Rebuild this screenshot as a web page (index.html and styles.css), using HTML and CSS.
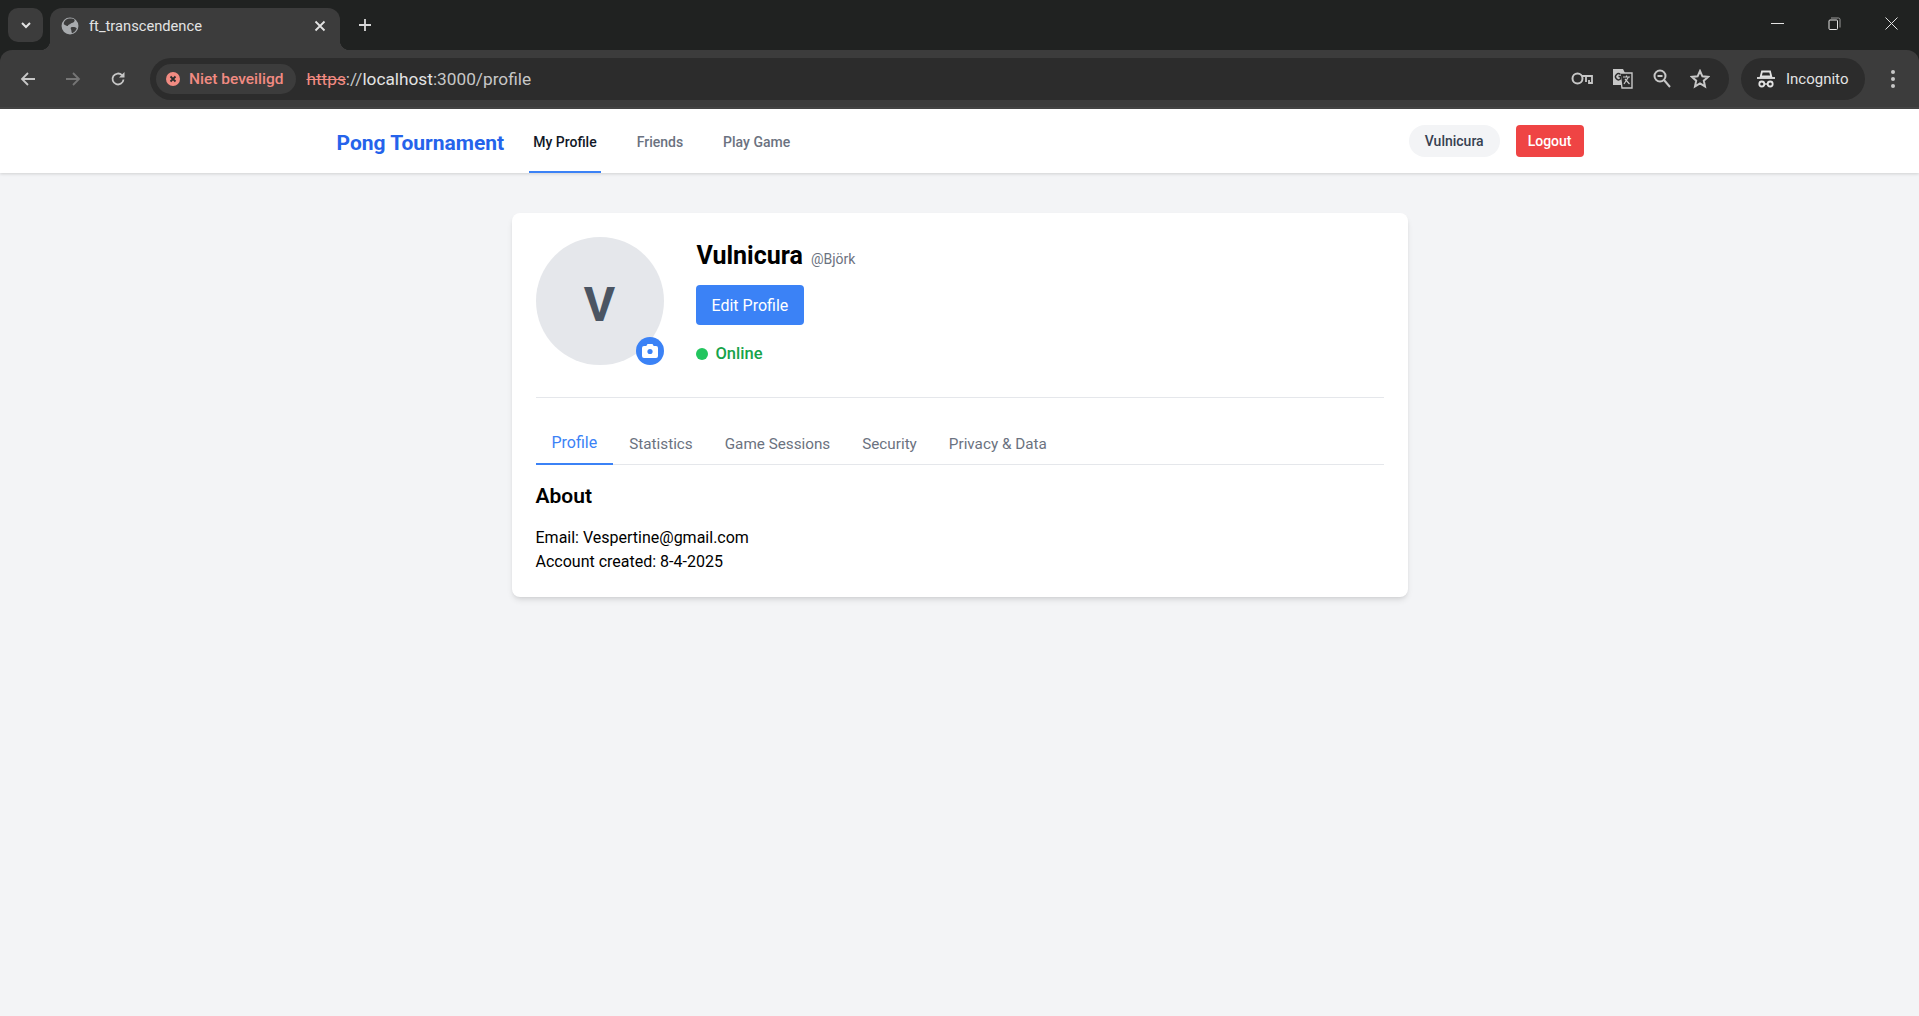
FILE: index.html
```html
<!DOCTYPE html>
<html lang="en">
<head>
    <meta charset="UTF-8">
    <meta name="viewport" content="width=device-width, initial-scale=1.0">
    <title>ft_transcendence</title>
    <link rel="stylesheet" href="styles.css">
</head>
<body>
    <!-- Browser window chrome -->
    <div class="browser-chrome">
        <div class="tab-strip">
            <div class="tab-search">
                <svg width="16" height="16" viewBox="0 0 16 16"><path d="M4 6l4 4 4-4" fill="none" stroke="#e3e3e3" stroke-width="2"/></svg>
            </div>
            <div class="tab">
                <svg class="tab-globe" width="18" height="18" viewBox="0 0 16 16"><circle cx="8" cy="8" r="7.500" fill="#a8abae"/><path d="M6 1.500c2 0 5-.5 6 1 .5 1.500-1 3-3 3-1 1-2.500 1-3 2.500-1 .5-2.500-1-3.500-1.500C2 5 3.500 2.500 6 1.500zM9 9c2-.5 4 0 5 1-.5 2-2 3.500-4 4.500-1-1-.5-2.500-1-3.500-.5-.5-.5-1.500 0-2z" fill="#3c3c3c"/></svg>
                <span class="tab-title">ft_transcendence</span>
                <svg class="tab-close" width="12" height="12" viewBox="0 0 12 12"><path d="M1.500 1.500l9 9M10.500 1.500l-9 9" stroke="#e3e3e3" stroke-width="1.800"/></svg>
            </div>
            <svg class="tab-new" width="14" height="14" viewBox="0 0 14 14"><path d="M7 1v12M1 7h12" stroke="#d8d8d8" stroke-width="1.800"/></svg>
            <div class="window-buttons">
                <svg width="13" height="13" viewBox="0 0 13 13"><path d="M0 6.500h13" stroke="#e3e3e3"/></svg>
                <svg width="13" height="13" viewBox="0 0 13 13"><rect x="1" y="3" width="8.500" height="9.500" rx="1" fill="none" stroke="#e3e3e3"/><path d="M3 1h7.500a1.500 1.500 0 0 1 1.500 1.500v8" fill="none" stroke="#9a9a9a"/></svg>
                <svg width="13" height="13" viewBox="0 0 13 13"><path d="M.5.5l12 12M12.500.5l-12 12" stroke="#e3e3e3"/></svg>
            </div>
        </div>
        <div class="toolbar">
            <svg class="tool-icon" width="16" height="16" viewBox="0 0 16 16"><path d="M15 8H2M8 2L2 8l6 6" fill="none" stroke="#c7c7c7" stroke-width="1.800"/></svg>
            <svg class="tool-icon" width="16" height="16" viewBox="0 0 16 16"><path d="M1 8h13M8 2l6 6-6 6" fill="none" stroke="#757575" stroke-width="1.800"/></svg>
            <svg class="tool-icon" width="16" height="16" viewBox="0 0 16 16"><path d="M13.500 8.500A5.500 5.500 0 1 1 12 4.200" fill="none" stroke="#c7c7c7" stroke-width="1.800"/><path d="M14.500 1v5.500H9z" fill="#c7c7c7"/></svg>
            <div class="omnibox">
                <div class="security-chip">
                    <svg width="14" height="14" viewBox="0 0 14 14"><circle cx="7" cy="7" r="7" fill="#f28b82"/><path d="M4.500 4.500l5 5M9.500 4.500l-5 5" stroke="#2c2c2c" stroke-width="1.800"/></svg>
                    <span>Niet beveiligd</span>
                </div>
                <div class="url"><s>https</s><span class="url-dim">://</span>localhost<span class="url-dim">:3000/profile</span></div>
                <div class="omni-icons">
                    <svg width="22" height="13" viewBox="0 0 22 13"><circle cx="6.500" cy="6.500" r="5" fill="none" stroke="#c7c7c7" stroke-width="2"/><path d="M11 4h10v7h-3V8M15 4v6" fill="none" stroke="#c7c7c7" stroke-width="1.800"/></svg>
                    <svg width="21" height="21" viewBox="0 0 21 21"><path d="M1 1h10l2 4v12H1z" fill="#c7c7c7"/><path d="M8 5h12v15H10z" fill="#2c2c2c" stroke="#c7c7c7" stroke-width="1.400"/><path d="M11 9h7M14.500 7.500V9M12 16l4.500-7M13 11l4.500 5" stroke="#c7c7c7" stroke-width="1.200"/><path d="M8.500 6.500a3 3 0 1 0 0 4.500V8.500H6.500" fill="none" stroke="#2c2c2c" stroke-width="1.400"/></svg>
                    <svg width="18" height="19" viewBox="0 0 18 19"><circle cx="7" cy="7" r="5.500" fill="none" stroke="#c7c7c7" stroke-width="2"/><path d="M4.500 7h5M11 11l6 7" stroke="#c7c7c7" stroke-width="2"/></svg>
                    <svg width="20" height="20" viewBox="0 0 20 20"><path d="M10 2l2.400 5.300 5.600.6-4.200 3.800 1.200 5.700L10 14.500l-5 2.900 1.200-5.700L2 7.900l5.600-.6z" fill="none" stroke="#c7c7c7" stroke-width="2"/></svg>
                </div>
            </div>
            <div class="incognito">
                <svg width="20" height="20" viewBox="0 0 20 20"><path d="M6 2.500h8l1.300 5H4.700z" fill="none" stroke="#e3e3e3" stroke-width="1.800"/><path d="M1 9h18" stroke="#e3e3e3" stroke-width="1.800"/><circle cx="5.800" cy="15" r="2.500" fill="none" stroke="#e3e3e3" stroke-width="1.800"/><circle cx="14.200" cy="15" r="2.500" fill="none" stroke="#e3e3e3" stroke-width="1.800"/><path d="M8.300 15h3.400" stroke="#e3e3e3" stroke-width="1.400"/></svg>
                <span>Incognito</span>
            </div>
            <svg class="menu-dots" width="4" height="18" viewBox="0 0 4 18"><circle cx="2" cy="2" r="2" fill="#c7c7c7"/><circle cx="2" cy="9" r="2" fill="#c7c7c7"/><circle cx="2" cy="16" r="2" fill="#c7c7c7"/></svg>
        </div>
    </div>

    <!-- Site navigation -->
    <nav class="site-nav">
        <div class="nav-inner">
            <a class="brand">Pong Tournament</a>
            <div class="nav-links">
                <a class="nav-link active">My Profile</a>
                <a class="nav-link">Friends</a>
                <a class="nav-link">Play Game</a>
            </div>
            <div class="nav-user">
                <span class="user-pill">Vulnicura</span>
                <button class="logout-btn">Logout</button>
            </div>
        </div>
    </nav>

    <!-- Profile card -->
    <main class="page">
        <section class="card">
            <div class="profile-head">
                <div class="avatar">
                    <span class="avatar-letter">V</span>
                    <div class="avatar-upload">
                        <svg width="16" height="14" viewBox="0 0 16 14"><path d="M5.500 0h5l1.200 2H14a2 2 0 0 1 2 2v8a2 2 0 0 1-2 2H2a2 2 0 0 1-2-2V4a2 2 0 0 1 2-2h2.300z" fill="#fff"/><circle cx="8" cy="7.500" r="2.600" fill="#3b82f6"/></svg>
                    </div>
                </div>
                <div class="profile-info">
                    <div class="name-row">
                        <h1>Vulnicura</h1>
                        <span class="handle">@Björk</span>
                    </div>
                    <button class="edit-btn">Edit Profile</button>
                    <div class="status"><i class="status-dot"></i>Online</div>
                </div>
            </div>
            <div class="tabs">
                <a class="tab-link active">Profile</a>
                <a class="tab-link">Statistics</a>
                <a class="tab-link">Game Sessions</a>
                <a class="tab-link">Security</a>
                <a class="tab-link">Privacy &amp; Data</a>
            </div>
            <h2>About</h2>
            <p>Email: Vespertine@gmail.com</p>
            <p>Account created: 8-4-2025</p>
        </section>
    </main>
</body>
</html>
```

FILE: styles.css
```css
* {
    box-sizing: border-box;
}

html, body {
    height: 100%;
}

body {
    margin: 0;
    display: flex;
    flex-direction: column;
    font-family: Roboto, "Noto Sans", sans-serif;
    background-color: #f3f4f6;
    color: #000;
}

/* Browser chrome */
.browser-chrome {
    flex: none;
    background-color: #202221;
}

.tab-strip {
    height: 50px;
    display: flex;
    align-items: flex-start;
    padding: 8px 0 0 8px;
}

.tab-search {
    width: 35px;
    height: 34px;
    display: flex;
    align-items: center;
    justify-content: center;
    background-color: #3c3c3c;
    border-radius: 10px;
}

.tab {
    width: 290px;
    height: 42px;
    margin-left: 7px;
    padding: 0 14px 7px 11px;
    position: relative;
    display: flex;
    align-items: center;
    background-color: #3c3c3c;
    border-radius: 12px 12px 0 0;
    color: #e3e3e3;
    font-size: 14.700px;
}

/* flared bottom corners of the active tab */
.tab::before,
.tab::after {
    content: "";
    width: 10px;
    height: 10px;
    position: absolute;
    bottom: 0;
}

.tab::before {
    left: -10px;
    background: radial-gradient(circle at 0 0, transparent 10px, #3c3c3c 10.500px);
}

.tab::after {
    right: -10px;
    background: radial-gradient(circle at 100% 0, transparent 10px, #3c3c3c 10.500px);
}

.tab-title {
    margin-left: 10px;
    flex: 1;
}

.tab-new {
    margin: 10px 0 0 18px;
}

.window-buttons {
    margin: 9px 0 0 auto;
    padding-right: 21px;
    display: flex;
    gap: 44px;
    line-height: 0;
}

.toolbar {
    height: 59px;
    display: flex;
    align-items: center;
    padding: 0 16px 0 20px;
    background-color: #3c3c3c;
    border-bottom: 2px solid #454545;
    border-radius: 12px 12px 0 0;
}

.tool-icon {
    margin-right: 29px;
    flex: none;
}

.tool-icon:nth-child(3) {
    margin-right: 24px;
}

.omnibox {
    flex: 1;
    height: 42px;
    margin: 0 12px 0 0;
    padding: 0 19px 0 6px;
    display: flex;
    align-items: center;
    background-color: #2c2c2c;
    border-radius: 21px;
    font-size: 16px;
}

.security-chip {
    height: 30px;
    padding: 0 13px 0 10px;
    display: flex;
    align-items: center;
    gap: 9px;
    background-color: #3c3c3c;
    border-radius: 15px;
    color: #f28b82;
    font-size: 15.500px;
    font-weight: 500;
}

.url {
    margin-left: 10px;
    color: #e3e3e3;
    font-size: 17.250px;
}

.url s {
    color: #f28b82;
}

.url-dim {
    color: #c7c7c7;
}

.omni-icons {
    margin-left: auto;
    display: flex;
    align-items: center;
    gap: 19.500px;
}

.incognito {
    width: 124px;
    height: 42px;
    padding-left: 15px;
    display: flex;
    align-items: center;
    gap: 10px;
    background-color: #2c2c2c;
    border-radius: 21px;
    color: #e3e3e3;
    font-size: 15px;
}

.menu-dots {
    margin: 0 8px 0 26px;
}

/* Site nav */
.site-nav {
    height: 64px;
    flex: none;
    background-color: #fff;
    box-shadow: 0 1px 3px rgba(0, 0, 0, 0.15);
}

.nav-inner {
    max-width: 1280px;
    height: 100%;
    margin: 0 auto;
    padding: 0 16px;
    display: flex;
    align-items: center;
}

.brand {
    padding: 3px 0 0 1px;
    color: #2563eb;
    font-size: 21px;
    font-weight: 700;
}

.nav-links {
    margin-left: 25px;
    height: 100%;
    display: flex;
    gap: 32px;
}

.nav-link {
    height: 100%;
    padding: 4px 4px 0;
    display: flex;
    align-items: center;
    color: #6b7280;
    font-size: 14px;
    font-weight: 500;
    border-bottom: 2px solid transparent;
}

.nav-link.active {
    color: #111827;
    border-bottom-color: #3b82f6;
}

.nav-user {
    margin-left: auto;
    display: flex;
    align-items: center;
    gap: 16px;
}

.user-pill {
    padding: 6px 16px;
    background-color: #f3f4f6;
    border-radius: 16px;
    color: #374151;
    font-size: 14px;
    font-weight: 500;
    line-height: 20px;
}

.logout-btn {
    height: 32px;
    padding: 0 12px;
    background-color: #ef4444;
    border: none;
    border-radius: 4px;
    color: #fff;
    font-family: inherit;
    font-size: 14px;
    font-weight: 500;
}

/* Profile card */
.page {
    flex: 1;
    padding-top: 40px;
}

.card {
    width: 896px;
    margin: 0 auto;
    padding: 24px 24px 23px;
    background-color: #fff;
    border-radius: 8px;
    box-shadow: 0 4px 6px -1px rgba(0, 0, 0, 0.1), 0 2px 4px -2px rgba(0, 0, 0, 0.1);
}

.profile-head {
    display: flex;
    gap: 32px;
    padding-bottom: 32px;
    border-bottom: 1px solid #e5e7eb;
}

.avatar {
    width: 128px;
    height: 128px;
    position: relative;
    display: flex;
    align-items: center;
    justify-content: center;
    background-color: #e5e7eb;
    border-radius: 50%;
    color: #4b5563;
    font-size: 48px;
    font-weight: 700;
}

.avatar-letter {
    padding-top: 6px;
}

.avatar-upload {
    width: 28px;
    height: 28px;
    position: absolute;
    right: 0;
    bottom: 0;
    display: flex;
    align-items: center;
    justify-content: center;
    background-color: #3b82f6;
    border-radius: 50%;
}

.profile-info {
    flex: 1;
}

.name-row {
    padding: 3px 0 0 1px;
    display: flex;
    align-items: baseline;
    gap: 8px;
}

.name-row h1 {
    margin: 0;
    font-size: 25px;
    font-weight: 700;
    line-height: 32px;
}

.handle {
    color: #6b7280;
    font-size: 14px;
}

.edit-btn {
    height: 40px;
    margin-top: 13px;
    padding: 0 16px;
    display: block;
    background-color: #3b82f6;
    border: none;
    border-radius: 4px;
    color: #fff;
    font-family: inherit;
    font-size: 16px;
}

.status {
    margin-top: 18px;
    display: flex;
    align-items: center;
    gap: 8px;
    color: #16a34a;
    font-size: 16.500px;
    font-weight: 500;
    line-height: 22px;
}

.status-dot {
    width: 12px;
    height: 12px;
    background-color: #22c55e;
    border-radius: 50%;
}

.tabs {
    margin-top: 24px;
    display: flex;
    border-bottom: 1px solid #e5e7eb;
}

.tab-link {
    padding: 10px 16px 7px;
    color: #6b7280;
    font-size: 15.250px;
    line-height: 24px;
}

.tab-link.active {
    margin-bottom: -1px;
    padding: 9px 16px 8px;
    color: #3b82f6;
    font-size: 16px;
    border-bottom: 2px solid #3b82f6;
}

.card h2 {
    margin: 17px 0 16px;
    font-size: 21px;
    font-weight: 600;
    line-height: 28px;
}

.card p {
    margin: 0;
    font-size: 16px;
    line-height: 24px;
}
```
